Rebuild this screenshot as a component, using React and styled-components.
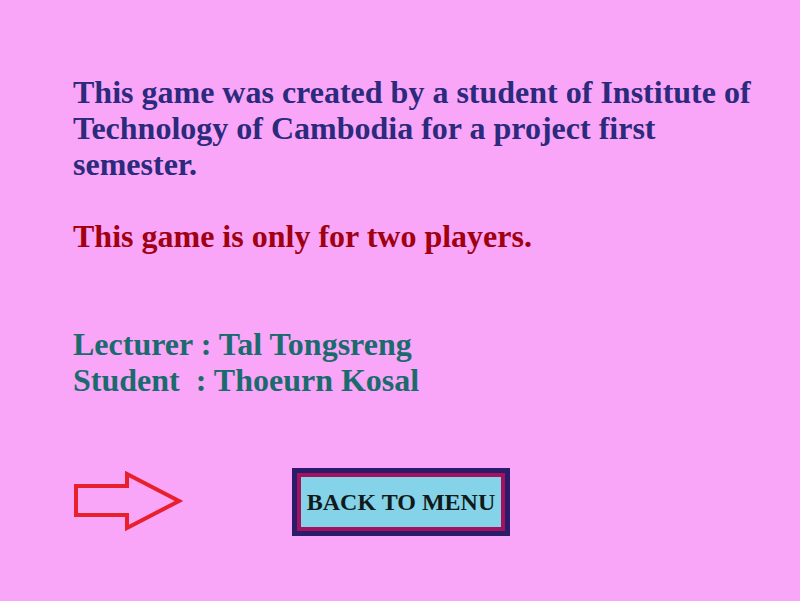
import React from 'react'
import styled, { createGlobalStyle } from 'styled-components'

const GlobalStyle = createGlobalStyle`
  html, body {
    margin: 0;
    padding: 0;
    background: #f9a6f8;
  }
`

const Page = styled.div`
  width: 800px;
  height: 601px;
  box-sizing: border-box;
  padding: 74px 0 0 73px;
  background: #f9a6f8;
  font-family: "Liberation Serif", "Times New Roman", serif;
  font-weight: bold;
  font-size: 32px;
  line-height: 36px;
`

const Para = styled.p`
  margin: 0 0 ${p => p.gap || 0}px 0;
  color: ${p => p.color};
  white-space: pre-wrap;
  width: 700px;
`

const Footer = styled.div`
  display: flex;
  align-items: center;
  margin-top: 70px;
`

const Arrow = styled.svg`
  width: 112px;
  height: 62px;
  display: block;
`

const MenuButton = styled.button`
  margin-left: 107px;
  width: 218px;
  height: 68px;
  box-sizing: border-box;
  border: 5px solid #2a1b6b;
  outline: 4px solid #a4125e;
  outline-offset: -9px;
  background: #84d3e8;
  font-family: "Liberation Serif", "Times New Roman", serif;
  font-weight: bold;
  font-size: 24px;
  color: #111a1a;
  padding: 0;
  cursor: pointer;
`

export default function App() {
  return (
    <>
      <GlobalStyle />
      <Page>
        <Para color="#2b2a7c" gap={36}>
          This game was created by a student of Institute of Technology of Cambodia for a project first semester.
        </Para>
        <Para color="#a00010" gap={72}>
          This game is only for two players.
        </Para>
        <Para color="#1b6b6e">
          {'Lecturer : Tal Tongsreng\nStudent  : Thoeurn Kosal'}
        </Para>
        <Footer>
          <Arrow viewBox="0 0 112 62">
            <path
              d="M3 15 H54 V3 L106 30 L54 57 V44 H3 Z"
              fill="none"
              stroke="#e8202c"
              strokeWidth="4"
              strokeLinejoin="miter"
            />
          </Arrow>
          <MenuButton>BACK TO MENU</MenuButton>
        </Footer>
      </Page>
    </>
  )
}
